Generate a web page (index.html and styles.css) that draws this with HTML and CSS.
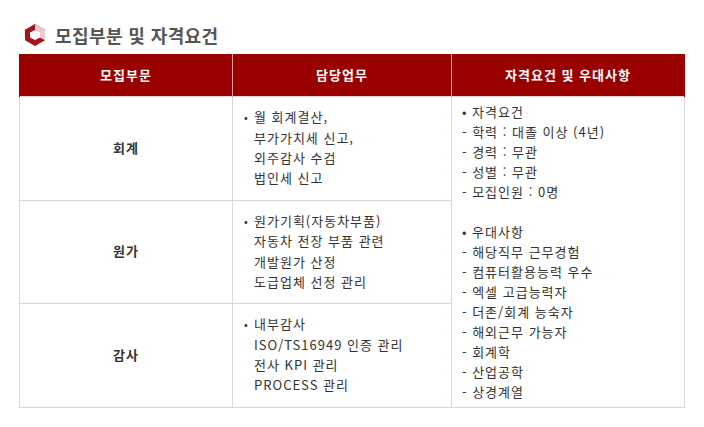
FILE: index.html
```html
<!DOCTYPE html>
<html lang="ko">
<head>
<meta charset="utf-8">
<title>모집부분 및 자격요건</title>
<link rel="stylesheet" href="styles.css">
</head>
<body>
<div class="wrap">
  <h2 class="title">
    <svg class="icon" width="22" height="24" viewBox="0 0 22 24">
      <polygon points="11,1 21,6.75 21,17.25 11,23 1,17.25 1,6.75" fill="#a3141c"/>
      <polygon points="11,1 21,6.75 21,17.25 11,12" fill="#f1c9cd"/>
      <polygon points="11,7 16,9.5 16,14.5 11,17 6,14.5 6,9.5" fill="#fff"/>
    </svg>
    <span>모집부분 및 자격요건</span>
  </h2>
  <table class="recruit">
    <colgroup>
      <col class="c1"><col class="c2"><col class="c3">
    </colgroup>
    <thead>
      <tr><th>모집부문</th><th>담당업무</th><th>자격요건 및 우대사항</th></tr>
    </thead>
    <tbody>
      <tr class="r1">
        <td class="dept">회계</td>
        <td class="duty">
          <ul>
            <li>월 회계결산,<br>부가가치세 신고,<br>외주감사 수검<br>법인세 신고</li>
          </ul>
        </td>
        <td class="req" rowspan="3">
          <p>• 자격요건</p>
          <p>- 학력 : 대졸 이상 (4년)</p>
          <p>- 경력 : 무관</p>
          <p>- 성별 : 무관</p>
          <p>- 모집인원 : 0명</p>
          <p class="blank">&nbsp;</p>
          <p>• 우대사항</p>
          <p>- 해당직무 근무경험</p>
          <p>- 컴퓨터활용능력 우수</p>
          <p>- 엑셀 고급능력자</p>
          <p>- 더존/회계 능숙자</p>
          <p>- 해외근무 가능자</p>
          <p>- 회계학</p>
          <p>- 산업공학</p>
          <p>- 상경계열</p>
        </td>
      </tr>
      <tr class="r2">
        <td class="dept">원가</td>
        <td class="duty">
          <ul>
            <li>원가기획(자동차부품)<br>자동차 전장 부품 관련<br>개발원가 산정<br>도급업체 선정 관리</li>
          </ul>
        </td>
      </tr>
      <tr class="r3">
        <td class="dept">감사</td>
        <td class="duty">
          <ul>
            <li>내부감사<br>ISO/TS16949 인증 관리<br>전사 KPI 관리<br>PROCESS 관리</li>
          </ul>
        </td>
      </tr>
    </tbody>
  </table>
</div>
</body>
</html>
```
FILE: styles.css
```css
* { box-sizing: border-box; }
html, body { margin: 0; padding: 0; background: #fff; }
body {
  font-family: "Noto Sans CJK KR", "Noto Sans", sans-serif;
  color: #333;
  font-size: 13px;
}
.wrap { padding: 23px 20px 0 19px; }
.title {
  display: flex;
  align-items: center;
  margin: 0 0 7px 0;
  padding-left: 5px;
  font-size: 18px;
  font-weight: 700;
  color: #555;
  line-height: 24px;
  height: 24px;
  letter-spacing: 0.4px;
}
.title .icon { margin-right: 9px; flex: none; }
.recruit {
  width: 665px;
  border-collapse: collapse;
  table-layout: fixed;
  letter-spacing: 1px;
}
.c1 { width: 213px; }
.c2 { width: 219px; }
.c3 { width: 233px; }
.recruit th {
  background: #990000;
  color: #fff;
  font-weight: 700;
  font-size: 13px;
  height: 42px;
  padding: 0;
  border-left: 1px solid #d9a0a0;
  border-right: 1px solid #d9a0a0;
  text-align: center;
  vertical-align: middle;
}
.recruit th:first-child { border-left-color: #990000; }
.recruit th:last-child { border-right-color: #990000; }
.recruit td {
  border: 1px solid #d8d8d8;
  vertical-align: middle;
  line-height: 20.3px;
}
.r1 td.dept, .r1 td.duty { height: 104px; }
.r2 td { height: 103px; }
.r3 td { height: 104px; }
.dept {
  text-align: center;
  font-weight: 700;
  color: #333;
}
.duty { padding: 0 0 0 11px; }
.duty ul { margin: 0; padding: 0; list-style: none; }
.duty li { padding-left: 10px; position: relative; }
.duty li::before {
  content: "•";
  position: absolute;
  left: 0;
  top: 0;
  font-size: 11px;
}
.req {
  padding: 5px 0 5px 10px;
  vertical-align: top;
}
.req p { margin: 0; line-height: 20px; }
```
